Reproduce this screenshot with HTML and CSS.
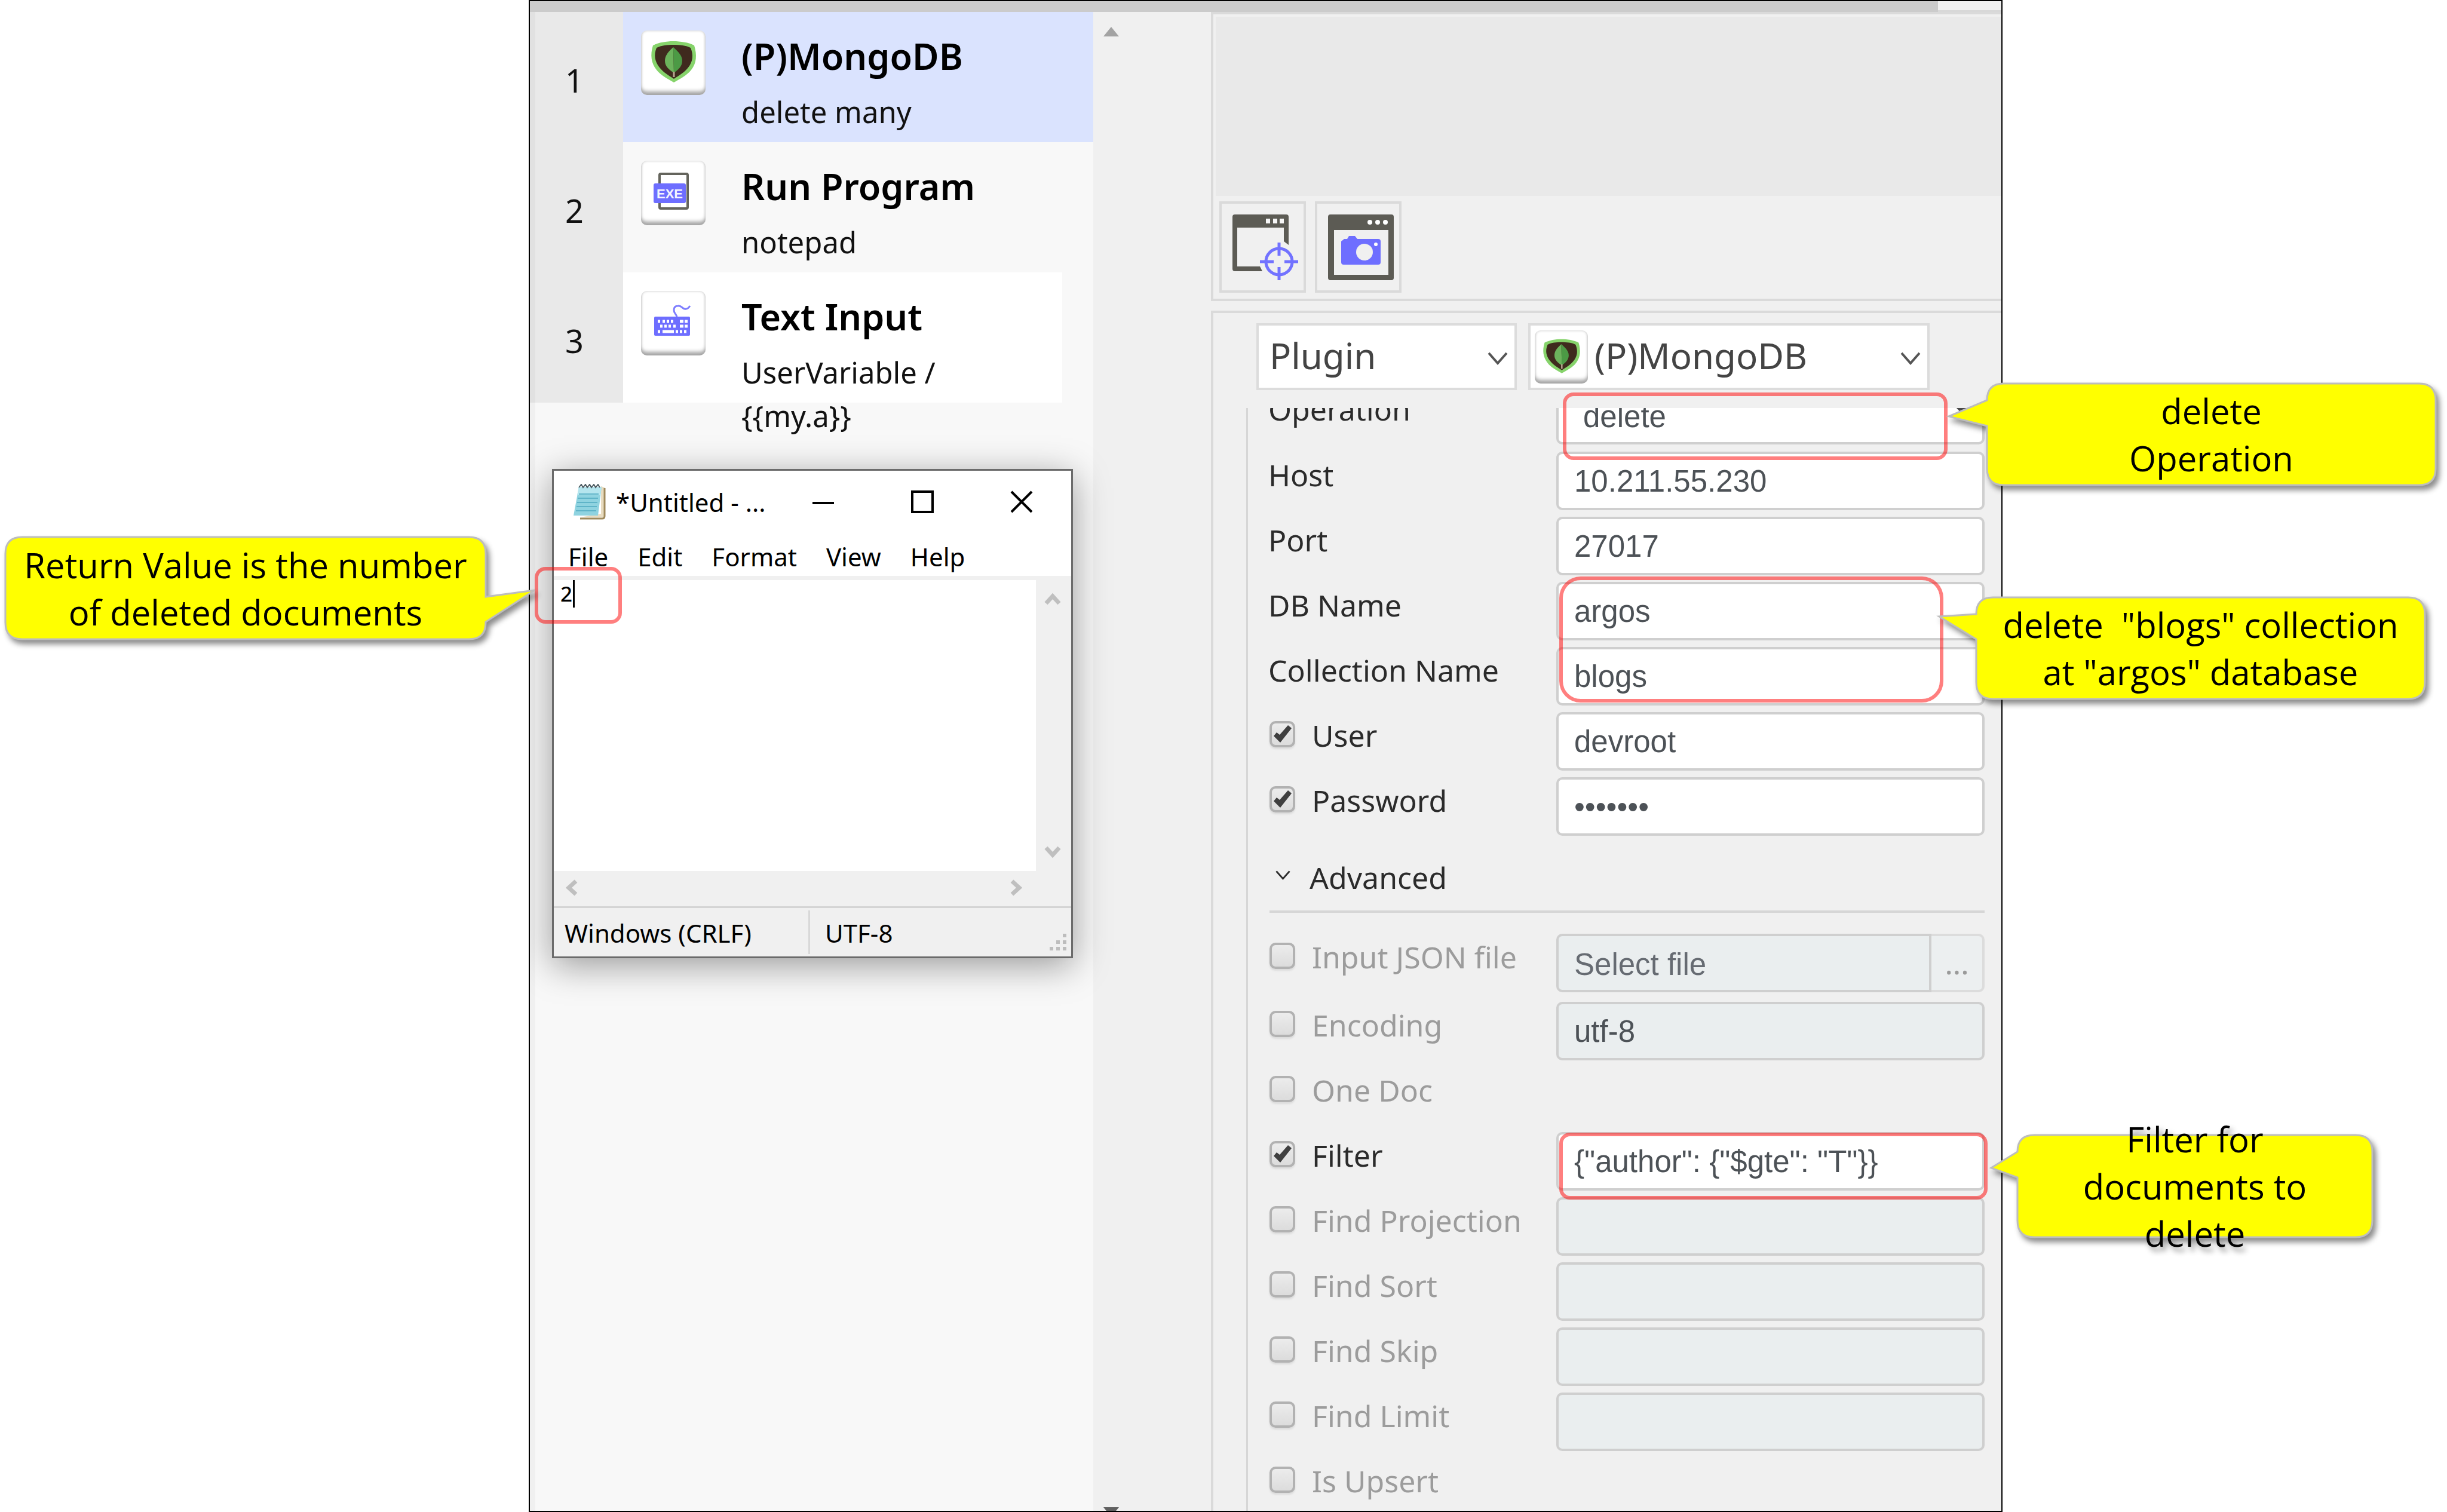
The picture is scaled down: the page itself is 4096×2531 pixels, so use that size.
FILE: index.html
```html
<!DOCTYPE html>
<html lang="en">
<head>
<meta charset="utf-8">
<title>MongoDB plugin: delete many</title>
<link rel="stylesheet" href="styles.css">
</head>
<body>
<svg class="symbols" aria-hidden="true">
  <symbol id="mongo" viewBox="0 0 108 108">
    <path d="M20 25C30 20 42 18 54 18s26 2 35 7c5 16 4 30-5 41-7 9-17 14-29 21-12-7-22-12-29-21-9-11-11-25-6-41z" fill="#86d36b"/>
    <path d="M26 29C34 25 44 24 54 24s22 1 29 5c5 12 4 23-4 33-6 8-15 13-24 19-9-6-18-11-24-19-8-10-10-21-5-33z" fill="#3f2a1e"/>
    <path d="M54 28C44 37 40 43 40 51c0 9 7 15 15 20z" fill="#6cb35c"/>
    <path d="M54 28c10 9 15 15 15 23 0 9-7 15-14 20z" fill="#4c9a45"/>
    <path d="M55 69v9" stroke="#b9a792" stroke-width="3"/>
  </symbol>
  <symbol id="chevron" viewBox="0 0 34 22">
    <path d="M2 2l15 17L32 2" fill="none" stroke="currentColor" stroke-width="4"/>
  </symbol>
  <symbol id="arrow" viewBox="0 0 28 22">
    <path d="M3 19L14 7l11 12" fill="none" stroke="currentColor" stroke-width="7"/>
  </symbol>
</svg>

<main class="page">
<div class="stage">
  <div class="window">
    <div class="strip"><span class="strip-bar"></span><span class="strip-end"></span></div>
    <div class="columns">
      <section class="steps">
        <ol class="step-list">
          <li class="step">
            <span class="step-number">1</span>
            <div class="step-body step-selected">
              <span class="tile"><svg><use href="#mongo"/></svg></span>
              <div><h2 class="step-title">(P)MongoDB</h2><p class="step-note">delete many</p></div>
            </div>
          </li>
          <li class="step">
            <span class="step-number">2</span>
            <div class="step-body">
              <span class="tile"><svg viewBox="0 0 108 108">
                <rect x="31" y="22" width="47" height="58" rx="2" fill="none" stroke="#64645c" stroke-width="4"/>
                <rect x="21" y="38" width="54" height="33" rx="3" fill="#6e6eff"/>
                <text x="48" y="63" class="exe">EXE</text>
              </svg></span>
              <div><h2 class="step-title">Run Program</h2><p class="step-note">notepad</p></div>
            </div>
          </li>
          <li class="step">
            <span class="step-number">3</span>
            <div class="step-body step-plain">
              <span class="tile"><svg viewBox="0 0 108 108">
                <path d="M60 44c0-5-5-6-5-12 0-5 3-7 7-7 6-1 6 4 11 5 4 1 7-2 9-5" fill="none" stroke="#7d7dff" stroke-width="3"/>
                <rect x="22" y="43" width="60" height="32" rx="2" fill="#6e6eff"/>
                <path d="M28 51h4m4 0h4m3 0h4m3 0h4m11 0h6m2 0h5M32 59h4m3 0h4m3 0h4m4 0h4m7 0h6m2 0h5M28 68h4m4 0h19m3 0h4m3 0h4m3 0h4" fill="none" stroke="#fff" stroke-width="5"/>
              </svg></span>
              <div><h2 class="step-title">Text Input</h2><p class="step-note">UserVariable /<br>{{my.a}}</p></div>
            </div>
          </li>
        </ol>
      </section>

      <div class="scroll-rail">
        <svg class="rail-up" viewBox="0 0 26 16"><path d="M13 0l13 16H0z" fill="#a3a3a3"/></svg>
        <svg class="rail-down" viewBox="0 0 26 16"><path d="M0 0h26L13 16z" fill="#606060"/></svg>
      </div>

      <section class="editor">
        <div class="preview-panel">
          <div class="preview"></div>
          <div class="toolbar">
            <button class="tool" type="button" aria-label="Select window"><svg viewBox="0 0 110 110">
              <path d="M4 0h86q4 0 4 4v47l-8-6V22H8v65h38l4 8H4q-4 0-4-4V4q0-4 4-4z" fill="#5c5b54"/>
              <path d="M56 7h7v8h-7zM68 7h7v8h-7zM79 7h7v8h-7z" fill="#f6f6f6"/>
              <g fill="none" stroke="#7272ff" stroke-width="5"><circle cx="78" cy="79" r="22"/><path d="M78 47v22M78 88v22M46 79h23M87 79h23"/></g>
            </svg></button>
            <button class="tool" type="button" aria-label="Capture window"><svg viewBox="0 0 110 110">
              <path d="M4 0h102q4 0 4 4v102q0 4-4 4H4q-4 0-4-4V4q0-4 4-4zM10 26v75h91V26z" fill="#5c5b54" fill-rule="evenodd"/>
              <g fill="#fff"><circle cx="70" cy="13" r="4"/><circle cx="83" cy="13" r="4"/><circle cx="96" cy="13" r="4"/></g>
              <path d="M22 45l5-4h5l3-5h10l4 5h35q4 0 4 4v35q0 4-4 4H26q-4 0-4-4z" fill="#6e6eff"/>
              <circle cx="61" cy="63" r="14" fill="#f0f0f0"/><circle cx="80" cy="50" r="3" fill="#fff"/>
            </svg></button>
          </div>
        </div>

        <form class="settings">
          <div class="pickers">
            <div class="picker picker-kind">
              <select class="picker-select" aria-label="Action type"><option>Plugin</option></select>
              <svg class="picker-arrow"><use href="#chevron"/></svg>
            </div>
            <div class="picker picker-plugin">
              <select class="picker-select" aria-label="Plugin"><option>(P)MongoDB</option></select>
              <span class="tile tile-small"><svg><use href="#mongo"/></svg></span>
              <svg class="picker-arrow"><use href="#chevron"/></svg>
            </div>
          </div>

          <div class="fields">
            <div class="field field-first"><label class="name" for="operation">Operation</label>
              <div class="operation"><select class="box" id="operation"><option>delete</option></select>
              <svg class="operation-arrow" viewBox="0 0 30 16"><path d="M0 0h30L15 16z" fill="#4a4a4a"/></svg></div></div>
            <div class="field"><label class="name" for="host">Host</label><input class="box" id="host" type="text" value="10.211.55.230"></div>
            <div class="field"><label class="name" for="port">Port</label><input class="box" id="port" type="text" value="27017"></div>
            <div class="field"><label class="name" for="db">DB Name</label><input class="box" id="db" type="text" value="argos"></div>
            <div class="field"><label class="name" for="collection">Collection Name</label><input class="box" id="collection" type="text" value="blogs"></div>
            <div class="field"><label class="name"><input class="tick" type="checkbox" checked>User</label><input class="box" type="text" aria-label="User" value="devroot"></div>
            <div class="field"><label class="name"><input class="tick" type="checkbox" checked>Password</label><input class="box" type="password" aria-label="Password" value="devroot"></div>

            <button class="advanced" type="button"><svg class="advanced-arrow"><use href="#chevron"/></svg>Advanced</button>

            <div class="field field-file"><label class="name name-off"><input class="tick" type="checkbox">Input JSON file</label>
              <div class="file"><input class="box box-file" type="text" aria-label="Input JSON file" placeholder="Select file" disabled><button class="browse" type="button" disabled>...</button></div></div>
            <div class="field"><label class="name name-off"><input class="tick" type="checkbox">Encoding</label><input class="box" type="text" aria-label="Encoding" value="utf-8" disabled></div>
            <div class="field"><label class="name name-off"><input class="tick" type="checkbox">One Doc</label></div>
            <div class="field"><label class="name"><input class="tick" type="checkbox" checked>Filter</label><input class="box" type="text" aria-label="Filter" value='{"author": {"$gte": "T"}}'></div>
            <div class="field"><label class="name name-off"><input class="tick" type="checkbox">Find Projection</label><input class="box" type="text" aria-label="Find Projection" disabled></div>
            <div class="field"><label class="name name-off"><input class="tick" type="checkbox">Find Sort</label><input class="box" type="text" aria-label="Find Sort" disabled></div>
            <div class="field"><label class="name name-off"><input class="tick" type="checkbox">Find Skip</label><input class="box" type="text" aria-label="Find Skip" disabled></div>
            <div class="field"><label class="name name-off"><input class="tick" type="checkbox">Find Limit</label><input class="box" type="text" aria-label="Find Limit" disabled></div>
            <div class="field"><label class="name name-off"><input class="tick" type="checkbox">Is Upsert</label></div>
          </div>
        </form>
      </section>
    </div>

    <section class="notepad">
      <header class="titlebar">
        <svg class="notepad-icon" viewBox="0 0 55 60">
          <path d="M12 56h37q4 0 4-4V6l-6-2v46z" fill="#e9dcc0"/><path d="M12 58h37q4 0 4-4V7" fill="none" stroke="#a08a5c" stroke-width="3"/>
          <path d="M10 5h38l-6 48H1z" fill="#8fd3e0"/><path d="M10 5h38l-2 14H7z" fill="#b5e5ee"/>
          <path d="M10 17h33M8 24h34M7 31h34M6 38h34M5 45h34" stroke="#5fb4c8" stroke-width="2"/>
          <path d="M10 6l4-5 3 5 4-5 3 5 4-5 3 5 4-5 3 5 4-5 3 5" fill="none" stroke="#4a5a60" stroke-width="2"/>
        </svg>
        <span class="titlebar-text">*Untitled - ...</span>
        <button class="control" type="button" aria-label="Minimize"><svg viewBox="0 0 38 38"><path d="M1 21h36"/></svg></button>
        <button class="control" type="button" aria-label="Maximize"><svg viewBox="0 0 38 38"><path d="M2 2h34v34H2z"/></svg></button>
        <button class="control" type="button" aria-label="Close"><svg viewBox="0 0 38 38"><path d="M2 2l34 34M36 2L2 36"/></svg></button>
      </header>
      <nav class="menubar">
        <button class="menu" type="button">File</button><button class="menu" type="button">Edit</button><button class="menu" type="button">Format</button><button class="menu" type="button">View</button><button class="menu" type="button">Help</button>
      </nav>
      <div class="pad">
        <div class="paper"><textarea class="paper-text" aria-label="Document">2</textarea><span class="caret"></span></div>
        <div class="bar-v"><svg class="arrow"><use href="#arrow"/></svg><svg class="arrow arrow-down"><use href="#arrow"/></svg></div>
        <div class="bar-h"><svg class="arrow arrow-left"><use href="#arrow"/></svg><svg class="arrow arrow-right"><use href="#arrow"/></svg></div>
        <div class="bar-corner"></div>
      </div>
      <footer class="status">
        <span class="status-ending">Windows (CRLF)</span><span class="status-encoding">UTF-8</span>
        <svg class="grip" viewBox="0 0 28 28"><path d="M22 0h6v6h-6zM11 11h6v6h-6zM22 11h6v6h-6zM0 22h6v6H0zM11 22h6v6h-6zM22 22h6v6h-6z" fill="#bdbdbd"/></svg>
      </footer>
    </section>
  </div>

  <div class="mark mark-result"></div>
  <div class="mark mark-operation"></div>
  <div class="mark mark-names"></div>
  <div class="mark mark-filter"></div>

  <aside class="callout callout-result">
    <svg class="bubble" viewBox="0 0 808 175"><path d="M30 2H778Q806 2 806 30V102L888 91L806 144V145Q806 173 778 173H30Q2 173 2 145V30Q2 2 30 2Z"/></svg>
    <p class="callout-text">Return Value is the number<br>of deleted documents</p>
  </aside>
  <aside class="callout callout-operation">
    <svg class="bubble" viewBox="0 0 755 174"><path d="M30 2H725Q753 2 753 30V144Q753 172 725 172H30Q2 172 2 144V73L-62 57L2 30Q2 2 30 2Z"/></svg>
    <p class="callout-text">delete<br>Operation</p>
  </aside>
  <aside class="callout callout-names">
    <svg class="bubble" viewBox="0 0 755 174"><path d="M30 2H725Q753 2 753 30V144Q753 172 725 172H30Q2 172 2 144V72L-60 34L2 30Q2 2 30 2Z"/></svg>
    <p class="callout-text">delete&nbsp; "blogs" collection<br>at "argos" database</p>
  </aside>
  <aside class="callout callout-filter">
    <svg class="bubble" viewBox="0 0 598 175"><path d="M30 2H568Q596 2 596 30V145Q596 173 568 173H30Q2 173 2 145V73L-42 57L2 30Q2 2 30 2Z"/></svg>
    <p class="callout-text">Filter for<br>documents to<br>delete</p>
  </aside>
</div>
</main>
</body>
</html>
```
FILE: styles.css
```css
* { box-sizing: border-box; }

body {
  margin: 0;
  background: #fff;
  color: #000;
  font-family: "Noto Sans", "Open Sans", sans-serif;
  overflow: hidden;
}

h2, p, ol { margin: 0; padding: 0; }
button, input, select, textarea { font: inherit; color: inherit; margin: 0; border-radius: 0; }
svg { display: block; }
.symbols { position: absolute; width: 0; height: 0; }

.page {
  display: grid;
  grid-template-columns: 885px minmax(0, 1fr) 744px;
}
.stage { grid-column: 2; position: relative; height: 100vh; }

/* Application window */
.window {
  position: relative;
  display: flex;
  flex-direction: column;
  height: 100%;
  border: 2px solid #000;
  background: #f0f0f0;
  overflow: hidden;
}
.strip { display: flex; flex: none; height: 18px; }
.strip-bar { flex: 1; background: #cbcbcb; }
.strip-end { width: 106px; border-bottom: 3px solid #d8d8d8; }
.columns {
  flex: 1;
  min-height: 0;
  display: grid;
  grid-template-columns: 943px 197px minmax(0, 1fr);
}

/* Step list */
.steps {
  padding-left: 9px;
  background: linear-gradient(#f8f8f8, #f8f8f8) content-box, #f0f0f0;
}
.step-list { list-style: none; margin-left: -9px; border-left: 9px solid #e1e1e1; }
.step { display: grid; grid-template: 218px / 147px 1fr; height: 218px; }
.step-number {
  display: flex;
  align-items: center;
  justify-content: center;
  padding: 10px 16px 0 0;
  background: #e9e9e9;
  color: #111;
  font-size: 54px;
}
.step-body { display: flex; gap: 60px; padding: 31px 0 0 30px; background: #f8f8f8; }
.step-selected { background: #dae3fe; }
.step-plain { background: #fff; margin-right: 52px; }
.step-title { font-size: 61px; line-height: 86px; font-weight: 600; white-space: nowrap; }
.step-note { margin-top: 14px; font-size: 49px; line-height: 73px; color: #111; white-space: nowrap; }

.tile {
  flex: none;
  display: block;
  width: 108px;
  height: 108px;
  border-radius: 10px;
  background: #fff;
  box-shadow: inset 0 -8px 6px -2px #a5a5a5, inset 0 0 4px #c4c4c4;
}
.tile svg { width: 100%; height: 100%; }
.tile-small { width: 89px; height: 89px; }
.exe { fill: #f4f4ff; font: 700 22px "Liberation Sans", sans-serif; text-anchor: middle; }

.scroll-rail { display: flex; flex-direction: column; justify-content: space-between; padding: 25px 0 0 17px; }
.rail-up { width: 26px; height: 16px; }
.rail-down { width: 26px; height: 16px; margin-bottom: -10px; }

/* Editor */
.editor { display: flex; flex-direction: column; min-height: 0; }
.preview-panel {
  flex: none;
  padding: 4px 0 10px 4px;
  border: 4px solid #dadada;
  border-right: 0;
}
.preview { height: 300px; background: #e9e9e9; }
.toolbar { display: flex; gap: 15px; padding: 9px 0 0 6px; }
.tool {
  width: 145px;
  height: 153px;
  padding: 18px 10px 17px 18px;
  border: 4px solid #dadada;
  background: #f0f0f0;
}
.tool svg { width: 110px; height: 110px; }

.settings {
  flex: 1;
  min-height: 0;
  display: flex;
  flex-direction: column;
  margin-top: 16px;
  border: 4px solid #dadada;
  border-width: 4px 0 0 4px;
}
.pickers { display: flex; flex: none; gap: 19px; padding: 17px 120px 30px 72px; }
.picker { position: relative; }
.picker-kind { flex: none; width: 436px; }
.picker-plugin { flex: 1; }
.picker-select {
  appearance: none;
  display: block;
  width: 100%;
  height: 112px;
  padding: 0 0 4px 18px;
  border: 4px solid #dcdcdc;
  background: #fff;
  color: #444;
  font-size: 60px;
}
.picker-plugin .picker-select { padding-left: 107px; }
.picker .tile { position: absolute; left: 11px; top: 12px; }
.picker-arrow { position: absolute; right: 15px; top: 48px; width: 34px; height: 22px; color: #555; }

.fields {
  flex: 1;
  min-height: 0;
  overflow: hidden;
  margin-left: 55px;
  padding: 0 28px 0 34px;
  border-left: 3px solid #d6d6d6;
}
.field {
  display: grid;
  grid-template-columns: 482px minmax(0, 1fr);
  align-items: start;
  height: 109px;
}
.field-first { margin-top: -37px; height: 110px; }
.field-file { height: 114px; }
.name { display: flex; color: #2b2b2b; font-size: 50px; line-height: 78px; white-space: nowrap; }
.name-off { color: #9c9c9c; }

.box {
  appearance: none;
  display: block;
  width: 100%;
  height: 98px;
  padding: 0 26px;
  border: 4px solid #cfcfcf;
  border-radius: 10px;
  background: #fff;
  color: #4d5257;
  font-family: "Liberation Sans", sans-serif;
  font-size: 51px;
}
.box:disabled { background: #eaeeef; opacity: 1; }
.box::placeholder { color: #666b72; opacity: 1; }
.operation { position: relative; }
.operation .box { padding: 4px 0 0 41px; }
.operation-arrow { position: absolute; right: 18px; top: 36px; width: 30px; height: 16px; }

.tick {
  appearance: none;
  flex: none;
  width: 43px;
  height: 44px;
  margin: 15px 28px 0 2px;
  border: 4px solid #b2b2b2;
  border-radius: 10px;
  background: linear-gradient(#ececec, #dcdcdc);
  box-shadow: 0 3px 3px #dcdcdc;
}
.tick:checked::before {
  content: "";
  display: block;
  width: 35px;
  height: 36px;
  background: #3f3f3f;
  clip-path: polygon(3px 21px, 8px 15px, 13px 19px, 27px 3px, 33px 8px, 14px 32px);
}

.advanced {
  display: flex;
  align-items: center;
  gap: 32px;
  width: calc(100% - 2px);
  height: 119px;
  margin: -1px 0 35px 2px;
  padding: 4px 0 0 10px;
  border: 0;
  border-bottom: 4px solid #d6d6d6;
  background: none;
  color: #2b2b2b;
  font-size: 50px;
}
.advanced-arrow { width: 25px; height: 20px; margin-bottom: 8px; }

.file { display: flex; }
.box-file { flex: 1; padding-top: 4px; border-radius: 10px 0 0 10px; }
.browse {
  width: 89px;
  height: 98px;
  padding: 0;
  border: 4px solid #dcdcdc;
  border-left: 0;
  border-radius: 0 10px 10px 0;
  background: #eceff0;
  color: #9a9a9a;
  font-size: 50px;
}

/* Notepad window, floating over the step list */
.notepad {
  position: absolute;
  left: 37px;
  top: 783px;
  width: 872px;
  border: 3px solid #6b6b6b;
  background: #fff;
  box-shadow: 0 12px 56px rgba(0, 0, 0, 0.38);
  font-size: 42px;
}
.titlebar { display: flex; align-items: center; height: 104px; padding-left: 32px; }
.notepad-icon { flex: none; width: 55px; height: 60px; }
.titlebar-text { flex: 1; padding-left: 17px; white-space: nowrap; }
.control { display: grid; place-items: center; width: 166px; height: 100%; padding: 0; border: 0; background: none; }
.control svg { width: 38px; height: 38px; fill: none; stroke: #000; stroke-width: 4; }
.menubar { display: flex; gap: 49px; height: 79px; padding: 8px 0 0 24px; border-bottom: 7px solid #f0f0f0; }
.menu { padding: 0; border: 0; background: none; line-height: 64px; }
.pad { display: grid; grid-template: 487px 59px / minmax(0, 1fr) 59px; background: #f0f0f0; color: #bfbfbf; }
.paper { position: relative; background: #fff; }
.paper-text {
  display: block;
  width: 100%;
  height: 100%;
  padding: 0 11px;
  border: 0;
  background: none;
  color: #000;
  font-size: 35px;
  font-weight: 500;
  line-height: 46px;
  resize: none;
  overflow: hidden;
}
.caret { position: absolute; left: 32px; top: 0; width: 3px; height: 46px; background: #000; }
.bar-v { display: flex; flex-direction: column; justify-content: space-between; align-items: center; padding: 20px 3px 20px 0; }
.bar-h { display: flex; justify-content: space-between; align-items: center; padding: 0 18px 4px 15px; }
.arrow { width: 28px; height: 22px; }
.arrow-down { transform: rotate(180deg); }
.arrow-left { transform: rotate(-90deg); }
.arrow-right { transform: rotate(90deg); }
.status { display: flex; align-items: stretch; height: 84px; border-top: 3px solid #d4d4d4; background: #f0f0f0; }
.status-ending { width: 429px; margin: 4px 0; padding-left: 18px; border-right: 3px solid #d8d8d8; line-height: 76px; }
.status-encoding { flex: 1; margin: 4px 0; padding-left: 25px; line-height: 76px; }
.grip { width: 28px; height: 28px; margin: 43px 8px 0 0; }

/* Annotations over the window */
.mark { position: absolute; border: 6px solid rgba(255, 0, 0, 0.5); border-radius: 18px; }
.mark-result { left: 10px; top: 949px; width: 146px; height: 95px; }
.mark-operation { left: 1731px; right: 92px; top: 657px; height: 113px; }
.mark-names { left: 1725px; right: 99px; top: 965px; height: 211px; border-radius: 36px; }
.mark-filter { left: 1725px; right: 25px; top: 1896px; height: 112px; }

.callout {
  position: absolute;
  display: grid;
  grid-template: 100% / 100%;
  place-items: center;
  filter: drop-shadow(5px 7px 5px rgba(0, 0, 0, 0.45));
}
.callout-result { left: -878px; top: 897px; width: 808px; height: 175px; }
.callout-operation { left: calc(100% - 28px); top: 640px; width: 755px; height: 174px; }
.callout-names { left: calc(100% - 46px); top: 998px; width: 755px; height: 174px; }
.callout-filter { left: calc(100% + 23px); top: 1898px; width: 598px; height: 175px; }
.bubble { grid-area: 1 / 1; width: 100%; height: 100%; overflow: visible; fill: #ff0; stroke: #bdbdbd; stroke-width: 3; }
.callout-text {
  grid-area: 1 / 1;
  position: relative;
  font-family: "Open Sans", sans-serif;
  font-size: 58px;
  line-height: 79px;
  text-align: center;
  white-space: nowrap;
}
```
